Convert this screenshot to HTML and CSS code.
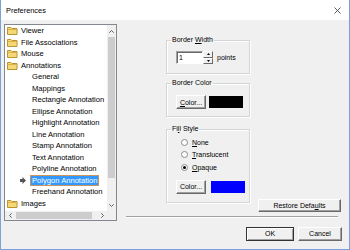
FILE: index.html
```html
<!DOCTYPE html>
<html lang="en">
<head>
    <meta charset="UTF-8">
    <title>Preferences</title>
    <link rel="stylesheet" href="styles.css">
</head>
<body>
    <div class="window">
        <div class="titlebar">
            <span class="title">Preferences</span>
            <svg class="close" width="7" height="7" viewBox="0 0 7 7"><path d="M0.5 0.5l6 6M6.5 0.5l-6 6" stroke="#333" stroke-width="0.8"/></svg>
        </div>

        <div class="body">
            <!-- category tree -->
            <div class="tree">
                <ul class="tree-list">
                    <li class="node"><svg class="folder" width="11" height="9" viewBox="0 0 11 9"><path d="M0.5 1.5h3.5l1 1h5v6h-9.5z" fill="#f5d775" stroke="#b89433"/><path d="M0.5 3.5h10" stroke="#d9b24a"/></svg>Viewer</li>
                    <li class="node"><svg class="folder" width="11" height="9" viewBox="0 0 11 9"><path d="M0.5 1.5h3.5l1 1h5v6h-9.5z" fill="#f5d775" stroke="#b89433"/><path d="M0.5 3.5h10" stroke="#d9b24a"/></svg>File Associations</li>
                    <li class="node"><svg class="folder" width="11" height="9" viewBox="0 0 11 9"><path d="M0.5 1.5h3.5l1 1h5v6h-9.5z" fill="#f5d775" stroke="#b89433"/><path d="M0.5 3.5h10" stroke="#d9b24a"/></svg>Mouse</li>
                    <li class="node"><svg class="folder" width="11" height="9" viewBox="0 0 11 9"><path d="M0.5 1.5h3.5l1 1h5v6h-9.5z" fill="#f5d775" stroke="#b89433"/><path d="M0.5 3.5h10" stroke="#d9b24a"/></svg>Annotations</li>
                    <li class="leaf"><i class="slot"></i><span>General</span></li>
                    <li class="leaf"><i class="slot"></i><span>Mappings</span></li>
                    <li class="leaf"><i class="slot"></i><span>Rectangle Annotation</span></li>
                    <li class="leaf"><i class="slot"></i><span>Ellipse Annotation</span></li>
                    <li class="leaf"><i class="slot"></i><span>Highlight Annotation</span></li>
                    <li class="leaf"><i class="slot"></i><span>Line Annotation</span></li>
                    <li class="leaf"><i class="slot"></i><span>Stamp Annotation</span></li>
                    <li class="leaf"><i class="slot"></i><span>Text Annotation</span></li>
                    <li class="leaf"><i class="slot"></i><span>Polyline Annotation</span></li>
                    <li class="leaf selected"><i class="slot"><svg width="6" height="7" viewBox="0 0 6 7"><path d="M0 2h2.5v-2l3.5 3.5-3.5 3.5v-2h-2.5z" fill="#555"/></svg></i><span>Polygon Annotation</span></li>
                    <li class="leaf"><i class="slot"></i><span>Freehand Annotation</span></li>
                    <li class="node"><svg class="folder" width="11" height="9" viewBox="0 0 11 9"><path d="M0.5 1.5h3.5l1 1h5v6h-9.5z" fill="#f5d775" stroke="#b89433"/><path d="M0.5 3.5h10" stroke="#d9b24a"/></svg>Images</li>
                </ul>
                <div class="vscroll">
                    <div class="arrow"><svg width="5" height="3" viewBox="0 0 5 3"><path d="M0.3 2.7l2.2-2.2 2.2 2.2" fill="none" stroke="#606060"/></svg></div>
                    <div class="thumb"></div>
                    <div class="track"></div>
                    <div class="arrow"><svg width="5" height="3" viewBox="0 0 5 3"><path d="M0.3 0.3l2.2 2.2 2.2-2.2" fill="none" stroke="#606060"/></svg></div>
                </div>
                <div class="hscroll">
                    <div class="arrow"><svg width="3" height="5" viewBox="0 0 3 5"><path d="M2.7 0.3l-2.2 2.2 2.2 2.2" fill="none" stroke="#606060"/></svg></div>
                    <div class="thumb"></div>
                    <div class="track"></div>
                    <div class="arrow"><svg width="3" height="5" viewBox="0 0 3 5"><path d="M0.3 0.3l2.2 2.2-2.2 2.2" fill="none" stroke="#606060"/></svg></div>
                </div>
                <div class="corner"></div>
            </div>

            <!-- settings panel -->
            <div class="panel">
                <div class="settings">
                    <div class="groups">
                        <fieldset class="group group-width">
                            <legend>Border <u>W</u>idth</legend>
                            <div class="row">
                                <div class="spin-input">1</div>
                                <div class="spinner">
                                    <div class="spin-btn"><svg width="3" height="2" viewBox="0 0 3 2"><path d="M1.5 0l1.5 2h-3z" fill="#000"/></svg></div>
                                    <div class="spin-btn"><svg width="3" height="2" viewBox="0 0 3 2"><path d="M0 0h3l-1.5 2z" fill="#000"/></svg></div>
                                </div>
                                <span class="unit">points</span>
                            </div>
                        </fieldset>

                        <fieldset class="group group-color">
                            <legend>Border Color</legend>
                            <div class="row">
                                <button class="btn color-btn"><u>C</u>olor...</button>
                                <div class="swatch swatch-black"></div>
                            </div>
                        </fieldset>

                        <fieldset class="group group-fill">
                            <legend>Fi<u>l</u>l Style</legend>
                            <div class="radios">
                                <div class="radio"><i class="dot"></i><span><u>N</u>one</span></div>
                                <div class="radio"><i class="dot"></i><span><u>T</u>ranslucent</span></div>
                                <div class="radio"><i class="dot checked"></i><span><u>O</u>paque</span></div>
                            </div>
                            <div class="row fill-row">
                                <button class="btn color-btn">Color...</button>
                                <div class="swatch swatch-blue"></div>
                            </div>
                        </fieldset>
                    </div>
                    <button class="btn restore">Restore Defa<u>u</u>lts</button>
                </div>
                <div class="separator"></div>
                <div class="actions">
                    <button class="btn default ok">OK</button>
                    <button class="btn cancel">Cancel</button>
                </div>
            </div>
        </div>
    </div>
</body>
</html>
```

FILE: styles.css
```css
/* Window frame */
body {
    margin: 0;
    background: #ffffff;
    font-family: 'Liberation Sans', Arial, sans-serif;
    color: #000000;
}

.window {
    width: 350px;
    height: 250px;
    box-sizing: border-box;
    border: 1px solid #7ba2d8;
    border-top: none;
    background: #f0f0f0;
    display: flex;
    flex-direction: column;
}

.titlebar {
    height: 20px;
    flex: none;
    background: #ffffff;
    display: flex;
    align-items: center;
    justify-content: space-between;
    padding: 0 8px 0 5px;
}

.title {
    font-size: 7.4px;
}

.body {
    flex: 1;
    display: flex;
    min-height: 0;
}

/* Tree view */
.tree {
    margin: 4px 0 0 3px;
    width: 113px;
    height: 197px;
    box-sizing: border-box;
    border: 1px solid #828790;
    background: #ffffff;
    display: grid;
    grid-template-columns: 1fr 9px;
    grid-template-rows: 1fr 9px;
}

.tree-list {
    list-style: none;
    margin: 0;
    padding: 0;
    overflow: hidden;
    font-size: 7.6px;
}

.tree-list li {
    height: 11.53px;
    display: flex;
    align-items: center;
    white-space: nowrap;
}

.node {
    padding-left: 2px;
}

.folder {
    flex: none;
    margin-right: 3px;
}

.leaf {
    padding-left: 15px;
}

.slot {
    flex: none;
    width: 10px;
    display: flex;
    align-items: center;
}

.leaf span {
    padding: 0 2px;
    line-height: 11px;
}

.leaf.selected span {
    background: #3399ff;
    color: #ffffff;
    box-shadow: inset 0 0 0 1px #c9955a;
}

.vscroll {
    background: #f0f0f0;
    display: flex;
    flex-direction: column;
}

.vscroll .arrow {
    height: 12px;
    display: flex;
    align-items: center;
    justify-content: center;
}

.vscroll .thumb {
    height: 141px;
    margin: 0 1px;
    background: #cdcdcd;
}

.vscroll .track {
    flex: 1;
}

.hscroll {
    background: #f0f0f0;
    display: flex;
}

.hscroll .arrow {
    width: 10px;
    display: flex;
    align-items: center;
    justify-content: center;
}

.hscroll .thumb {
    width: 76px;
    margin: 1px 0 1px 1px;
    background: #cdcdcd;
}

.hscroll .track {
    flex: 1;
}

.corner {
    background: #f0f0f0;
}

/* Settings panel */
.panel {
    flex: 1;
    display: flex;
    flex-direction: column;
    font-size: 7px;
}

.settings {
    display: flex;
    align-items: flex-end;
    padding: 16px 0 0 49px;
}

.groups {
    width: 84px;
    padding-bottom: 9px;
}

.group {
    margin: 0;
    padding: 0 0 0 9px;
    min-width: 0;
    border: 1px solid #d5d5d5;
    box-shadow: inset 1px 1px #ffffff, 1px 1px #ffffff;
}

.group legend {
    margin-left: -5px;
    padding: 0 1px;
    line-height: 8px;
}

.group-width {
    padding-top: 7px;
    padding-bottom: 9px;
}

.group-color {
    margin-top: 5px;
    padding-top: 8px;
    padding-bottom: 7px;
}

.group-fill {
    margin-top: 8px;
    padding-top: 3px;
    padding-bottom: 8px;
}

.row {
    display: flex;
    align-items: center;
}

.spin-input {
    width: 27px;
    height: 13px;
    box-sizing: border-box;
    background: #ffffff;
    border: 1px solid;
    border-color: #a0a0a0 #ffffff #ffffff #a0a0a0;
    box-shadow: inset 1px 1px #696969;
    padding: 2px 0 0 2px;
    line-height: 8px;
}

.spinner {
    width: 10px;
    height: 13px;
    display: flex;
    flex-direction: column;
}

.spin-btn {
    flex: 1;
    box-sizing: border-box;
    border: 1px solid;
    border-color: #ffffff #696969 #696969 #ffffff;
    background: #f0f0f0;
    display: flex;
    align-items: center;
    justify-content: center;
}

.unit {
    margin-left: 4px;
}

.btn {
    font-family: 'Liberation Sans', Arial, sans-serif;
    font-size: 7px;
    color: #000000;
    margin: 0;
    padding: 0;
    background: #f0f0f0;
    border: 1px solid;
    border-color: #ffffff #696969 #696969 #ffffff;
    box-shadow: inset -1px -1px #a0a0a0;
    height: 14px;
}

.color-btn {
    width: 30px;
}

.swatch {
    width: 34px;
    height: 12px;
    margin-left: 3px;
}

.swatch-black {
    background: #000000;
}

.swatch-blue {
    background: #0000ff;
    margin-left: 5px;
}

.radios {
    margin-left: 1px;
}

.radio {
    height: 12.5px;
    display: flex;
    align-items: center;
}

.dot {
    width: 7px;
    height: 7px;
    box-sizing: border-box;
    border-radius: 50%;
    background: #ffffff;
    border: 1px solid #8a8a8a;
    margin: 0 4px 0 4px;
    display: flex;
    align-items: center;
    justify-content: center;
}

.dot.checked::after {
    content: "";
    width: 3px;
    height: 3px;
    border-radius: 50%;
    background: #000000;
}

.fill-row {
    margin-top: 6px;
}

.restore {
    width: 83px;
    height: 13px;
    margin-left: 8px;
}

.separator {
    margin: 4px 11px 0 9px;
    height: 1px;
    border-bottom: 1px solid #ffffff;
    background: #a0a0a0;
}

.actions {
    display: flex;
    justify-content: flex-end;
    gap: 4px;
    margin-top: 9px;
    padding-right: 7px;
}

.ok {
    width: 48px;
}

.cancel {
    width: 44px;
}

.btn.default {
    border-color: #333333;
    box-shadow: inset 1px 1px #ffffff, inset -1px -1px #a0a0a0;
}
```
